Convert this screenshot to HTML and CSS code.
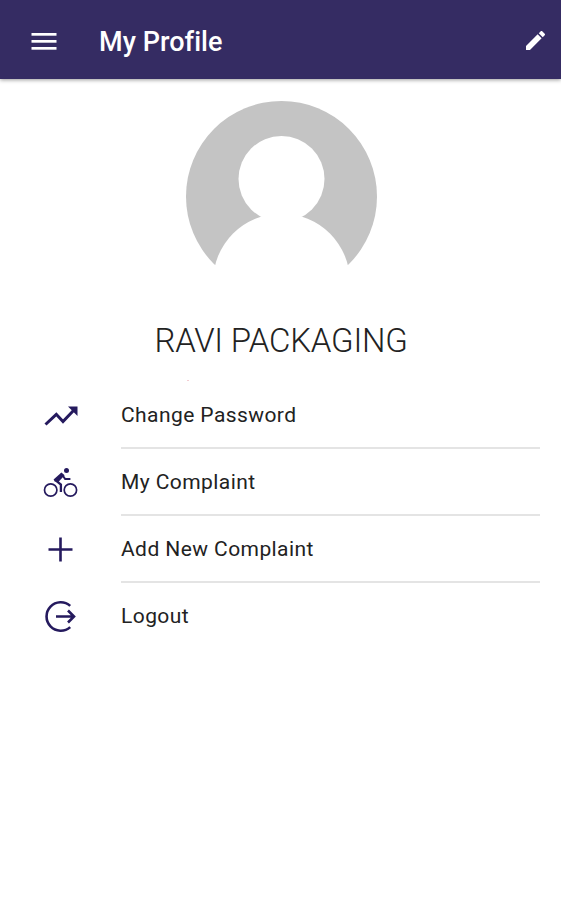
FILE: index.html
```
<!DOCTYPE html>
<html lang="en">
<head>
  <meta charset="UTF-8">
  <meta name="viewport" content="width=device-width, initial-scale=1.0">
  <title>My Profile</title>
  <link rel="stylesheet" href="styles.css">
</head>
<body>
  <header class="topbar">
    <svg class="menu-icon" viewBox="0 0 26 20" fill="#fff">
      <rect x="0.5" y="1" width="25" height="2.7"/>
      <rect x="0.5" y="8" width="25" height="2.7"/>
      <rect x="0.5" y="15" width="25" height="2.7"/>
    </svg>
    <h1>My Profile</h1>
    <svg class="edit-icon" viewBox="3 3 18 18" fill="#fff">
      <path d="M3 17.25V21h3.75L17.81 9.94l-3.75-3.75L3 17.25zM20.71 7.04a1 1 0 0 0 0-1.41l-2.34-2.34a1 1 0 0 0-1.41 0l-1.83 1.83 3.75 3.75 1.83-1.83z"/>
    </svg>
  </header>

  <main>
    <div class="profile">
      <svg class="avatar" viewBox="0 0 191 191">
        <circle cx="95.5" cy="95.5" r="95.5" fill="#c4c4c4"/>
        <circle cx="95.5" cy="78" r="43" fill="#fff"/>
        <circle cx="95.5" cy="181" r="68.5" fill="#fff"/>
        <rect x="0" y="164" width="191" height="28" fill="#fff"/>
      </svg>
      <h2>RAVI PACKAGING</h2>
      <div class="dot"></div>
    </div>

    <ul class="menu">
      <li>
        <svg viewBox="0 0 40 40" fill="none" stroke="#251a5e" stroke-width="3">
          <path d="M5.5 28.5L16.3 18.3L23 25.5L34 14"/>
          <path d="M28 10.5H37.5V20z" fill="#251a5e" stroke="none"/>
        </svg>
        <span>Change Password</span>
      </li>
      <li>
        <svg viewBox="0 0 40 40" fill="none" stroke="#251a5e" stroke-width="1.7">
          <circle cx="10.7" cy="27" r="6.2"/>
          <circle cx="30.4" cy="27" r="6.2"/>
          <circle cx="26.5" cy="7.5" r="2.5" fill="#251a5e" stroke="none"/>
          <path d="M20.9 29V21.6L16 17.6" stroke-width="2.3"/>
          <path d="M22 11.6L25.2 16H30.4" stroke-width="2"/>
          <path d="M13.6 16.6L21.4 9.4L24.6 12.2L18.2 19.2L14.6 18.6z" fill="#251a5e" stroke="none"/>
        </svg>
        <span>My Complaint</span>
      </li>
      <li>
        <svg viewBox="0 0 40 40" fill="none" stroke="#251a5e" stroke-width="2.6">
          <path d="M20.5 7.5V31.5M8.5 19.5H32.5"/>
        </svg>
        <span>Add New Complaint</span>
      </li>
      <li>
        <svg viewBox="0 0 40 40" fill="none" stroke="#251a5e" stroke-width="2.6">
          <path d="M30.2 8.9A14.2 14.2 0 1 0 30.2 30.1"/>
          <path d="M16 19.5H34M28 13.5L34 19.5L28 25.5"/>
        </svg>
        <span>Logout</span>
      </li>
    </ul>
  </main>
</body>
</html>
```

FILE: styles.css
```
* { box-sizing: border-box; }
body { margin: 0; min-height: 900px; background: #fff; font-family: Roboto, sans-serif; color: #222; }
.topbar { display: flex; align-items: center; height: 79px; padding: 4px 16px 0 31px; background: #352c63; box-shadow: 0 1px 4px rgba(0, 0, 0, 0.4); }
.menu-icon { width: 26px; height: 20px; }
.topbar h1 { flex: 1; margin: 0 0 0 42px; font-size: 27px; line-height: 32px; font-weight: 500; letter-spacing: 0.05px; color: #fff; }
.edit-icon { width: 19px; height: 19px; margin-bottom: 3px; }
.profile { display: flex; flex-direction: column; align-items: center; height: 303px; padding: 22px 0 0 1px; }
.avatar { width: 191px; height: 191px; }
.profile h2 { margin: 29px 0 0; font-size: 33px; line-height: 40px; font-weight: 300; letter-spacing: -0.2px; color: #222; }
.dot { width: 2px; height: 1px; margin: 19px 187px 0 0; background: #f3cdd2; }
.menu { list-style: none; margin: 0; padding: 0 21px 0 40px; }
.menu li { display: flex; align-items: center; height: 67px; }
.menu svg { width: 40px; height: 40px; margin-right: 41px; flex: none; }
.menu span { flex: 1; height: 67px; font-size: 21px; line-height: 66px; letter-spacing: 0.42px; border-bottom: 2px solid #e4e4e4; }
.menu li:last-child span { border-bottom: none; }
```
